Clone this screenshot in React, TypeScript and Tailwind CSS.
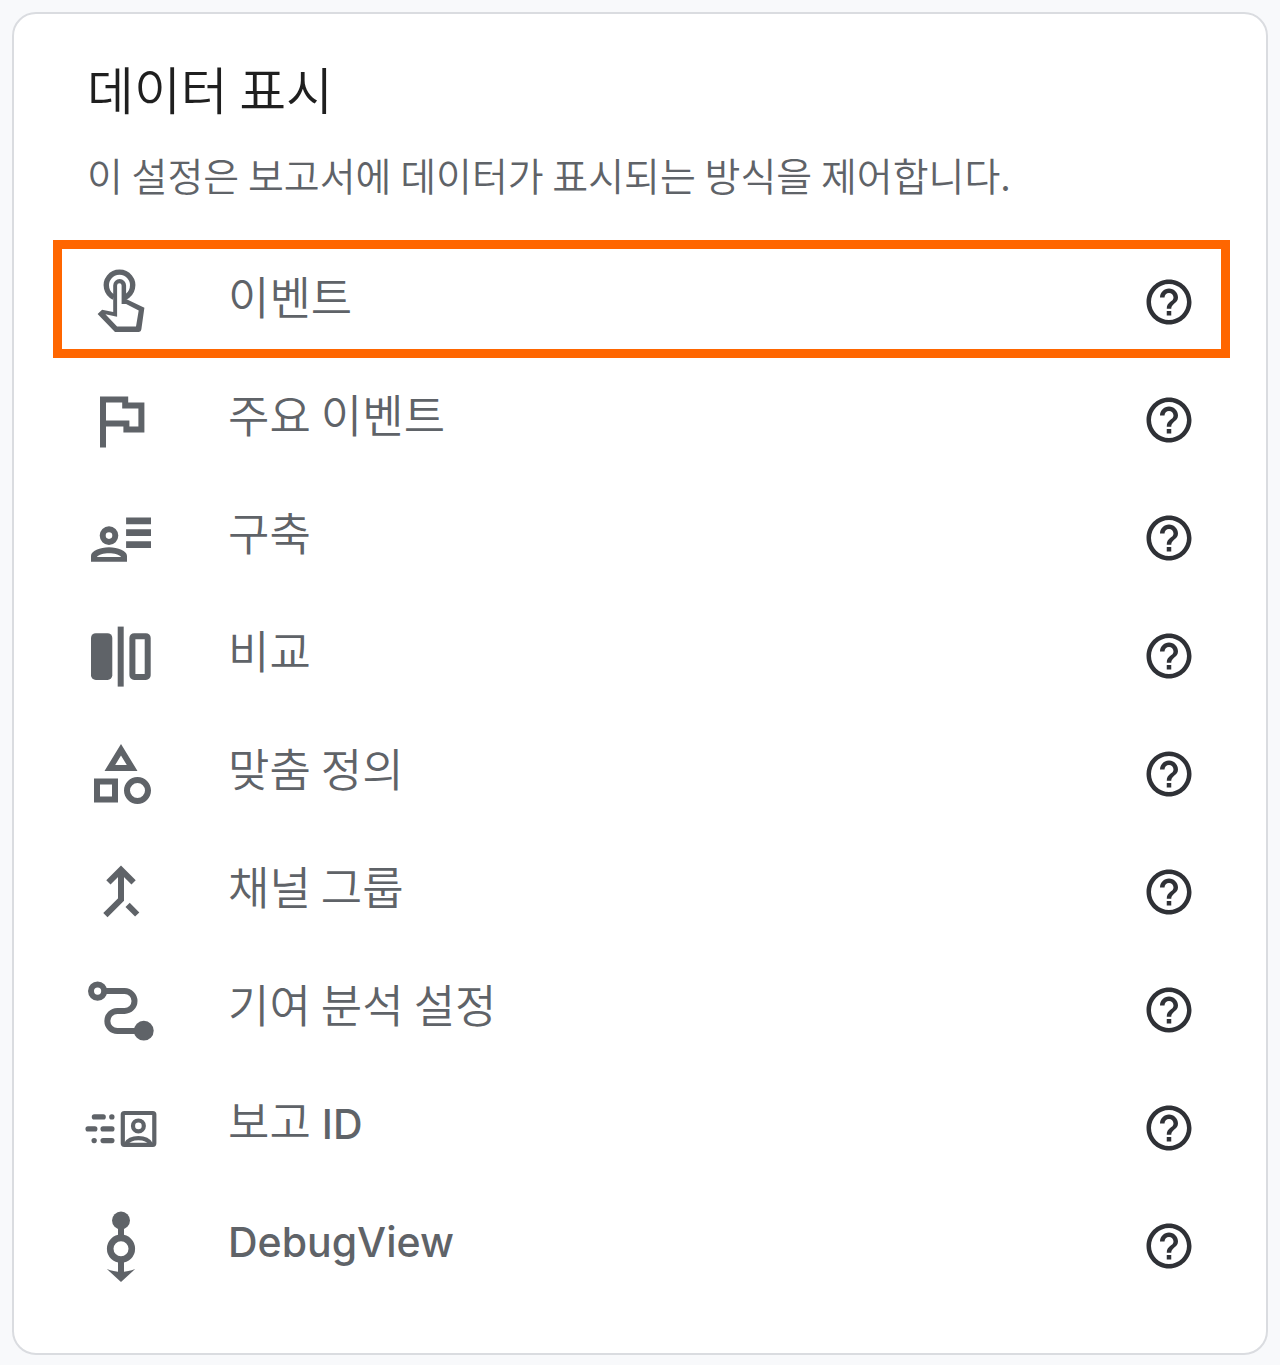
import type { ReactNode } from "react"
import { MdHelpOutline, MdOutlineCategory } from "react-icons/md"

function Icon({ children }: { children: ReactNode }) {
  return (
    <svg
      viewBox="0 0 24 24"
      fill="none"
      stroke="currentColor"
      strokeWidth="2"
      aria-hidden="true"
      className="size-full overflow-visible"
    >
      {children}
    </svg>
  )
}

function TouchIcon() {
  return (
    <Icon>
      <path d="M9.6 10.4a4.4 4.4 0 1 1 3.8 0" strokeWidth="1.8" />
      <path
        d="M9.4 6.5a2.15 2.15 0 0 1 4.3 0V11l6.1 2.9-1 7.1q-.1 1-1 1H10l-5.8-6 1.5-1.4 3.7.7zM10.7 6.500v10.400l-3.900-.8 3.900 4.100H17l.9-5.400-4.200-2.100h-1.500V6.500a.75.75 0 0 0-1.500 0z"
        fill="currentColor"
        fillRule="evenodd"
        stroke="none"
      />
    </Icon>
  )
}

function FlagIcon() {
  return (
    <Icon>
      <path d="M6 21.2v-16h7.4v2h5.4v8h-5v-2H6" />
    </Icon>
  )
}

function AudienceIcon() {
  return (
    <Icon>
      <path d="M13.7 6.3H22M13.7 10.2H22M13.7 14.2H22" strokeWidth="2.2" />
      <circle cx="8" cy="11.2" r="2.1" />
      <path
        d="M2 19.9V18c0-1.7 3-2.9 6-2.9s6 1.2 6 2.9v1.9zM4 18.3h8c-.5-.7-2.2-1.2-4-1.2s-3.5.5-4 1.2z"
        fill="currentColor"
        fillRule="evenodd"
        stroke="none"
      />
    </Icon>
  )
}

function CompareIcon() {
  return (
    <Icon>
      <rect x="2" y="4.4" width="7.1" height="15.6" rx="1.6" fill="currentColor" stroke="none" />
      <path d="M11.9 2.2v20" />
      <rect x="15.8" y="5.4" width="5.1" height="13.6" rx=".6" />
    </Icon>
  )
}

function MergeIcon() {
  return (
    <Icon>
      <path d="M7.8 8.8 12 4.6l4.2 4.2M12 5v9.5l-5.2 5.2M14.2 16.3l3.2 3.2" />
    </Icon>
  )
}

function PathIcon() {
  return (
    <Icon>
      <circle cx="4.2" cy="5.7" r="2.2" />
      <path d="M6.8 5.7h6.4a3.3 3.3 0 0 1 0 6.6h-2.4a3.3 3.3 0 0 0 0 6.7H18" />
      <circle cx="19.6" cy="18.9" r="3.3" fill="currentColor" stroke="none" />
    </Icon>
  )
}

function IdentityIcon() {
  return (
    <Icon>
      <path
        d="M3.1 8.3h3M8.9 8.3h.1M1 12.3h2.3M6 12.3h3M3 16.2h.1M6 16.2h3"
        strokeWidth="1.7"
        strokeLinecap="round"
      />
      <g strokeWidth="1.4">
        <rect x="12.6" y="7" width="10.5" height="10.6" rx=".5" />
        <circle cx="17.8" cy="11.3" r="1.8" />
        <path d="M13.6 17.4c.8-1.4 2.4-2 4.2-2s3.4.6 4.2 2" />
      </g>
    </Icon>
  )
}

function DebugIcon() {
  return (
    <Icon>
      <circle cx="12" cy="3.5" r="3" fill="currentColor" stroke="none" />
      <path d="M12 5v4M12 17v4" />
      <circle cx="12" cy="12.9" r="3.6" strokeWidth="2.2" />
      <path d="M7.3 19.7c1.5.6 3 .9 4.7.9s3.2-.3 4.7-.9L12 24z" fill="currentColor" stroke="none" />
    </Icon>
  )
}

const items = [
  { label: "이벤트", icon: <TouchIcon />, active: true },
  { label: "주요 이벤트", icon: <FlagIcon /> },
  { label: "구축", icon: <AudienceIcon /> },
  { label: "비교", icon: <CompareIcon /> },
  { label: "맞춤 정의", icon: <MdOutlineCategory className="size-full" /> },
  { label: "채널 그룹", icon: <MergeIcon /> },
  { label: "기여 분석 설정", icon: <PathIcon /> },
  { label: "보고", latin: "ID", icon: <IdentityIcon /> },
  { label: "", latin: "DebugView", icon: <DebugIcon /> },
]

export default function App() {
  return (
    <main className="bg-[#f8f9fb] p-3 pb-2.5 font-['Noto_Sans_CJK_KR',sans-serif] font-[350]">
      <section className="rounded-[24px] border-2 border-[#dadce0] bg-white pt-[38px] pr-9 pb-[51px] pl-[39px]">
        <header className="pl-[34px]">
          <h1 className="text-[51px] leading-[72px] text-[#1f1f1f]">데이터 표시</h1>
          <p className="mt-[22px] text-[39px] leading-[56px] text-[#5f6368]">
            이 설정은 보고서에 데이터가 표시되는 방식을 제어합니다.
          </p>
        </header>

        <ul className="mt-[38px]">
          {items.map(({ label, latin, icon, active }) => (
            <li
              key={label + (latin ?? "")}
              className={`flex h-[118px] items-center border-[9px] pt-1.5 pr-[25px] pl-[23px] text-[#5f6368] ${
                active ? "border-[#ff6600]" : "border-transparent"
              }`}
            >
              <a href="#" className="flex flex-1 items-center gap-[71px]">
                <span className="size-[72px] shrink-0">{icon}</span>
                <span className="pb-3 text-[45px] leading-[62px]">
                  {label}
                  {latin && (
                    <span className="font-['Inter',sans-serif] text-[41px] font-medium">
                      {label && " "}
                      {latin}
                    </span>
                  )}
                </span>
              </a>
              <button type="button" aria-label={`${label} ${latin ?? ""} 도움말`} className="text-[#2f3136]">
                <MdHelpOutline className="size-[54px]" />
              </button>
            </li>
          ))}
        </ul>
      </section>
    </main>
  )
}
